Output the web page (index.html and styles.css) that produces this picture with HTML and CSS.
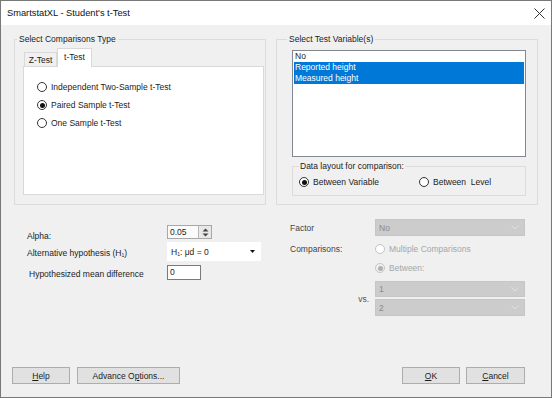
FILE: index.html
```html
<!DOCTYPE html>
<html lang="en">
<head>
  <meta charset="UTF-8" />
  <title>SmartstatXL - Student's t-Test</title>
  <link rel="stylesheet" href="styles.css">
</head>
<body>
  <div class="window">
    <div class="titlebar">
      <span>SmartstatXL - Student's t-Test</span>
      <svg class="close" width="11" height="11" viewBox="0 0 11 11">
        <path d="M0.5 0.5 L10.5 10.5 M10.5 0.5 L0.5 10.5" stroke="#333" stroke-width="1" fill="none" />
      </svg>
    </div>

    <div class="main">
      <div class="top">
        <fieldset class="group group-type">
          <legend>Select Comparisons Type</legend>
          <div class="tabs">
            <span class="tab">Z-Test</span>
            <span class="tab active">t-Test</span>
          </div>
          <div class="tab-panel">
            <div class="radio"><span class="circle"></span>Independent Two-Sample t-Test</div>
            <div class="radio"><span class="circle checked"></span>Paired Sample t-Test</div>
            <div class="radio"><span class="circle"></span>One Sample t-Test</div>
          </div>
        </fieldset>

        <fieldset class="group group-vars">
          <legend>Select Test Variable(s)</legend>
          <div class="listbox">
            <div class="item">No</div>
            <div class="item selected">Reported height</div>
            <div class="item selected">Measured height</div>
          </div>
          <fieldset class="subgroup">
            <legend>Data layout for comparison:</legend>
            <div class="radio-row">
              <div class="radio first"><span class="circle checked"></span>Between Variable</div>
              <div class="radio"><span class="circle"></span>Between&nbsp; Level</div>
            </div>
          </fieldset>
        </fieldset>
      </div>

      <div class="options">
        <div class="opts-left">
          <div class="row row-alpha">
            <span class="lbl">Alpha:</span>
            <div class="spin">
              <span class="spin-value">0.05</span>
              <span class="spin-btns">
                <svg width="7" height="4" viewBox="0 0 7 4"><path d="M0.5 3.5 L3.5 0.5 L6.5 3.5 Z" fill="#444" /></svg>
                <svg width="7" height="4" viewBox="0 0 7 4"><path d="M0.5 0.5 L3.5 3.5 L6.5 0.5 Z" fill="#444" /></svg>
              </span>
            </div>
          </div>
          <div class="row row-hyp">
            <span class="lbl">Alternative hypothesis (H<sub>1</sub>)</span>
            <div class="dropdown">
              <span>H<sub>1</sub>: μd = 0</span>
              <svg width="5" height="3" viewBox="0 0 5 3"><path d="M0 0 L5 0 L2.5 3 Z" fill="#111" /></svg>
            </div>
          </div>
          <div class="row row-diff">
            <span class="lbl lbl-diff">Hypothesized mean difference</span>
            <div class="textbox">0</div>
          </div>
        </div>

        <div class="opts-right">
          <span class="lbl-r">Factor</span>
          <div class="combo"><span>No</span><svg width="8" height="5" viewBox="0 0 8 5"><path d="M0.5 0.5 L4 4 L7.5 0.5" stroke="#e2e2e2" fill="none" /></svg></div>

          <span class="lbl-r">Comparisons:</span>
          <div class="radio disabled"><span class="circle"></span>Multiple Comparisons</div>

          <span></span>
          <div class="radio disabled"><span class="circle checked"></span>Between:</div>

          <span class="lbl-vs">vs.</span>
          <div class="combo-stack">
            <div class="combo"><span>1</span><svg width="8" height="5" viewBox="0 0 8 5"><path d="M0.5 0.5 L4 4 L7.5 0.5" stroke="#e2e2e2" fill="none" /></svg></div>
            <div class="combo"><span>2</span><svg width="8" height="5" viewBox="0 0 8 5"><path d="M0.5 0.5 L4 4 L7.5 0.5" stroke="#e2e2e2" fill="none" /></svg></div>
          </div>
        </div>
      </div>

      <div class="buttons">
        <div class="btn-group">
          <button class="btn btn-help"><u>H</u>elp</button>
          <button class="btn btn-adv">Advance O<u>p</u>tions...</button>
        </div>
        <div class="btn-group">
          <button class="btn btn-ok"><u>O</u>K</button>
          <button class="btn btn-cancel"><u>C</u>ancel</button>
        </div>
      </div>
    </div>
  </div>
</body>
</html>
```

FILE: styles.css
```css
body {
  margin: 0;
  font-family: "Liberation Sans", Arial, sans-serif;
  font-size: 8.5px;
  color: #1c1c1c;
  background: #f0f0f0;
}

.window {
  box-sizing: border-box;
  width: 552px;
  height: 398px;
  border: 1px solid #787878;
  background: #f0f0f0;
  display: flex;
  flex-direction: column;
}

.titlebar {
  height: 24px;
  background: #fff;
  display: flex;
  justify-content: space-between;
  align-items: center;
  padding: 0 6px 0 6px;
  font-size: 9.3px;
  color: #111;
}

.main {
  flex: 1;
  display: flex;
  flex-direction: column;
  padding: 9px 13px 13px 11px;
}

/* top group boxes */
.top {
  display: flex;
  gap: 10px;
  margin-left: 2px;
}

fieldset {
  margin: 0;
  min-width: 0;
  border: 1px solid #dcdcdc;
}

legend {
  line-height: 11px;
  padding: 0 2px;
}

.group-type {
  width: 252px;
  box-sizing: border-box;
  padding: 0 1px 9px 8px;
}

.group-type legend { margin-left: -6px; }

.group-vars {
  width: 262px;
  box-sizing: border-box;
  padding: 0 11px 7px 15px;
}

.group-vars legend { margin-left: -5px; }

.tabs {
  display: flex;
  align-items: flex-end;
  margin: 3px 0 0 1px;
  height: 18px;
}

.tab {
  box-sizing: border-box;
  height: 14px;
  width: 33px;
  border: 1px solid #d9d9d9;
  border-bottom: none;
  background: #f0f0f0;
  display: flex;
  align-items: center;
  justify-content: center;
  padding-top: 1px;
}

.tab.active {
  height: 19px;
  width: 35px;
  background: #fff;
  margin-bottom: -1px;
  position: relative;
  padding-top: 0;
  padding-bottom: 2px;
}

.tab-panel {
  box-sizing: border-box;
  height: 129px;
  background: #fff;
  border: 1px solid #d9d9d9;
  padding: 11px 0 0 13px;
}

.radio {
  height: 18px;
  display: flex;
  align-items: center;
  gap: 4px;
  white-space: nowrap;
}

.circle {
  box-sizing: border-box;
  width: 10px;
  height: 10px;
  border: 1px solid #333;
  border-radius: 50%;
  background: #fff;
  display: flex;
  align-items: center;
  justify-content: center;
  flex: none;
}

.circle.checked::after {
  content: "";
  width: 5px;
  height: 5px;
  border-radius: 50%;
  background: #111;
}

.listbox {
  box-sizing: border-box;
  height: 107px;
  margin-top: 5px;
  border: 1px solid #828790;
  background: #fff;
  padding: 0 1px;
}

.item {
  height: 11px;
  line-height: 11px;
  padding-left: 1px;
}

.item.selected {
  background: #0078d7;
  color: #fff;
}

.subgroup {
  margin-top: 4px;
  padding: 0 6px 6px 6px;
}

.subgroup legend { padding: 0 1px; margin-left: 0; }

.radio-row {
  display: flex;
  margin-top: 3px;
}

.radio-row .radio { height: 14px; }
.radio-row .radio.first { width: 120px; }

/* option rows */
.options {
  display: flex;
}

.opts-left {
  margin-left: 15px;
  padding-top: 20px;
  width: 234px;
}

.row {
  display: flex;
  align-items: center;
}

.lbl { width: 140px; padding-top: 3px; }
.lbl-diff { padding-left: 2px; width: 138px; }

sub {
  font-size: 5px;
  vertical-align: -1px;
}

.row-alpha { height: 14px; }
.row-alpha .lbl { padding-top: 8px; }
.row-hyp { height: 19px; margin-top: 3px; }
.row-diff { height: 14px; margin-top: 4px; }

.spin {
  display: flex;
  height: 14px;
  width: 45px;
  box-sizing: border-box;
  border: 1px solid #a8a8a8;
  background: #fafafa;
}

.spin-value {
  flex: 1;
  padding-left: 2px;
  display: flex;
  align-items: center;
}

.spin-btns {
  width: 12px;
  border-left: 1px solid #b8b8b8;
  background: #e8e8e8;
  display: flex;
  flex-direction: column;
  align-items: center;
  justify-content: space-around;
  padding: 1px 0;
}

.dropdown {
  box-sizing: border-box;
  width: 94px;
  height: 19px;
  background: #fff;
  display: flex;
  align-items: center;
  justify-content: space-between;
  padding: 0 6px 0 4px;
}

.textbox {
  box-sizing: border-box;
  width: 34px;
  height: 15px;
  border: 1px solid #7a7a7a;
  background: #fff;
  padding-left: 2px;
  display: flex;
  align-items: center;
}

.opts-right {
  margin-left: 29px;
  padding-top: 14px;
  display: grid;
  grid-template-columns: 85px 150px;
  grid-template-rows: 17px 12px 12px 35px;
  row-gap: 7px;
  align-items: center;
}

.lbl-r { color: #444; }

.lbl-vs {
  color: #555;
  justify-self: end;
  padding-right: 6px;
  padding-top: 1px;
}

.combo {
  box-sizing: border-box;
  height: 17px;
  background: #cccccc;
  border: 1px solid #c6c6c6;
  color: #8a8a8a;
  display: flex;
  align-items: center;
  justify-content: space-between;
  padding: 0 5px 0 3px;
}

.combo-stack {
  display: flex;
  flex-direction: column;
  gap: 2px;
}

.combo-stack .combo:first-child { height: 16px; }

.radio.disabled { color: #a6a6a6; height: 12px; }

.radio.disabled .circle {
  border-color: #c4c4c4;
  background: #fff;
}

.radio.disabled .circle.checked {
  background: #f0f0f0;
}

.radio.disabled .circle.checked::after { background: #b0b0b0; }

/* buttons */
.buttons {
  margin-top: auto;
  display: flex;
  justify-content: space-between;
  padding-right: 13px;
}

.btn-group {
  display: flex;
  gap: 7px;
}

.btn {
  box-sizing: border-box;
  height: 17px;
  margin: 0;
  padding: 0;
  font: inherit;
  color: #1c1c1c;
  background: #e1e1e1;
  border: 1px solid #adadad;
}

.btn-help { width: 58px; }
.btn-adv { width: 103px; }
.btn-ok { width: 58px; }
.btn-cancel { width: 59px; margin-left: -1px; }
```
